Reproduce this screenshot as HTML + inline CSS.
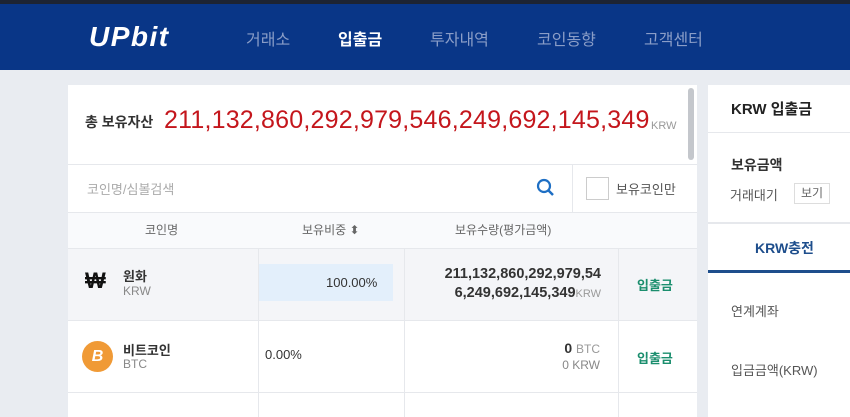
<!DOCTYPE html>
<html><head><meta charset="utf-8"><style>
*{margin:0;padding:0;box-sizing:border-box}
body{width:850px;height:417px;overflow:hidden;background:#e9ecf1;font-family:"Liberation Sans","Noto Sans CJK KR",sans-serif;position:relative}
.top{position:absolute;left:0;top:0;width:850px;height:4px;background:#1d2433}
.hdr{position:absolute;left:0;top:4px;width:850px;height:66px;background:#093687}
.logo{position:absolute;left:89px;top:17px;color:#fff;font-size:28px;font-weight:bold;font-style:italic;letter-spacing:1.5px}
.nav{position:absolute;top:22px;font-size:16px;color:#8a9dc7}
.a{position:absolute;color:#333}
.p{position:absolute;background:#fff}
.ln{position:absolute;background:#e6e8ec}
</style></head><body>
<div class="top"></div>
<div class="hdr">
<div class="logo">UPbit</div>
<div class="nav" style="left:246px">거래소</div>
<div class="nav" style="left:338px;color:#fff;font-weight:bold">입출금</div>
<div class="nav" style="left:430px">투자내역</div>
<div class="nav" style="left:537px">코인동향</div>
<div class="nav" style="left:644px">고객센터</div>
</div>

<div class="p" style="left:68px;top:85px;width:629px;height:332px"></div>
<div style="position:absolute;left:688px;top:88px;width:6px;height:72px;background:#c4c7cc;border-radius:3px"></div>
<div class="a" style="left:85px;top:112px;font-size:14px;font-weight:bold">총 보유자산</div>
<div class="a" style="left:164px;top:106px;font-size:25px;color:#c4161c;letter-spacing:0.2px">211,132,860,292,979,546,249,692,145,349</div>
<div class="a" style="left:651px;top:120px;font-size:11px;color:#999">KRW</div>
<div class="ln" style="left:68px;top:164px;width:629px;height:1px"></div>
<div class="a" style="left:87px;top:179px;font-size:13px;color:#aaa">코인명/심볼검색</div>
<svg style="position:absolute;left:536px;top:178px" width="20" height="20" viewBox="0 0 20 20"><circle cx="8" cy="8" r="6" fill="none" stroke="#1e6fc4" stroke-width="2.2"/><path d="M12.5 12.5L17 17" stroke="#1e6fc4" stroke-width="2.5"/></svg>
<div class="ln" style="left:572px;top:164px;width:1px;height:48px"></div>
<div style="position:absolute;left:586px;top:177px;width:23px;height:23px;border:1px solid #ccc;background:#fff"></div>
<div class="a" style="left:616px;top:179px;font-size:13px;color:#555">보유코인만</div>
<div class="ln" style="left:68px;top:212px;width:629px;height:1px"></div>
<div style="position:absolute;left:68px;top:213px;width:629px;height:35px;background:#f9fafc"></div>
<div class="a" style="left:145px;top:221px;font-size:12px;color:#666">코인명</div>
<div class="a" style="left:302px;top:221px;font-size:12px;color:#666">보유비중 ⬍</div>
<div class="a" style="left:455px;top:221px;font-size:12px;color:#666">보유수량(평가금액)</div>
<div style="position:absolute;left:68px;top:248px;width:629px;height:72px;background:#f4f5f8"></div>
<div class="ln" style="left:68px;top:248px;width:629px;height:1px"></div>
<div class="ln" style="left:68px;top:320px;width:629px;height:1px"></div>
<div class="ln" style="left:68px;top:392px;width:629px;height:1px"></div>
<div class="ln" style="left:258px;top:248px;width:1px;height:169px"></div>
<div class="ln" style="left:404px;top:248px;width:1px;height:169px"></div>
<div class="ln" style="left:618px;top:248px;width:1px;height:169px"></div>
<div class="a" style="left:85px;top:268px;font-size:22px;font-weight:bold;color:#111">₩</div>
<div class="a" style="left:123px;top:266px;font-size:13px;font-weight:bold">원화</div>
<div class="a" style="left:123px;top:284px;font-size:12px;color:#888">KRW</div>
<div style="position:absolute;left:259px;top:264px;width:134px;height:37px;background:#e3effb"></div>
<div class="a" style="left:326px;top:275px;font-size:13px;color:#333">100.00%</div>
<div class="a" style="left:409px;top:265px;font-size:14.5px;font-weight:bold;text-align:right;width:192px;line-height:19px">211,132,860,292,979,54<br>6,249,692,145,349<span style="font-size:11px;color:#999;font-weight:normal">KRW</span></div>
<div class="a" style="left:637px;top:275px;font-size:13px;font-weight:bold;color:#1b8e6e">입출금</div>
<div style="position:absolute;left:82px;top:341px;width:31px;height:31px;border-radius:50%;background:#f09a36;color:#fff;font-weight:bold;font-style:italic;text-align:center;line-height:31px;font-size:16px">B</div>
<div class="a" style="left:123px;top:340px;font-size:13px;font-weight:bold">비트코인</div>
<div class="a" style="left:123px;top:357px;font-size:12px;color:#888">BTC</div>
<div class="a" style="left:265px;top:347px;font-size:13px">0.00%</div>
<div class="a" style="left:530px;top:340px;width:70px;text-align:right;font-size:14px;font-weight:bold">0 <span style="font-size:12px;color:#999;font-weight:normal">BTC</span></div>
<div class="a" style="left:530px;top:358px;width:70px;text-align:right;font-size:12px;color:#888">0 KRW</div>
<div class="a" style="left:637px;top:348px;font-size:13px;font-weight:bold;color:#1b8e6e">입출금</div>

<div class="p" style="left:708px;top:85px;width:142px;height:332px"></div>
<div class="a" style="left:731px;top:98px;font-size:15px;font-weight:bold;color:#222">KRW 입출금</div>
<div class="ln" style="left:708px;top:132px;width:142px;height:1px"></div>
<div class="a" style="left:731px;top:155px;font-size:14px;font-weight:bold">보유금액</div>
<div class="a" style="left:730px;top:185px;font-size:13px;color:#555">거래대기</div>
<div style="position:absolute;left:794px;top:183px;width:36px;height:21px;border:1px solid #ddd;font-size:12px;color:#666;text-align:center;line-height:19px">보기</div>
<div style="position:absolute;left:708px;top:222px;width:142px;height:2px;background:#e6e8ec"></div>
<div class="a" style="left:755px;top:238px;font-size:14px;font-weight:bold;color:#1e4e8c">KRW충전</div>
<div style="position:absolute;left:708px;top:270px;width:142px;height:3px;background:#1e4e8c"></div>
<div class="a" style="left:731px;top:301px;font-size:13px;color:#555">연계계좌</div>
<div class="a" style="left:731px;top:360px;font-size:13px;color:#555">입금금액(KRW)</div>
</body></html>
